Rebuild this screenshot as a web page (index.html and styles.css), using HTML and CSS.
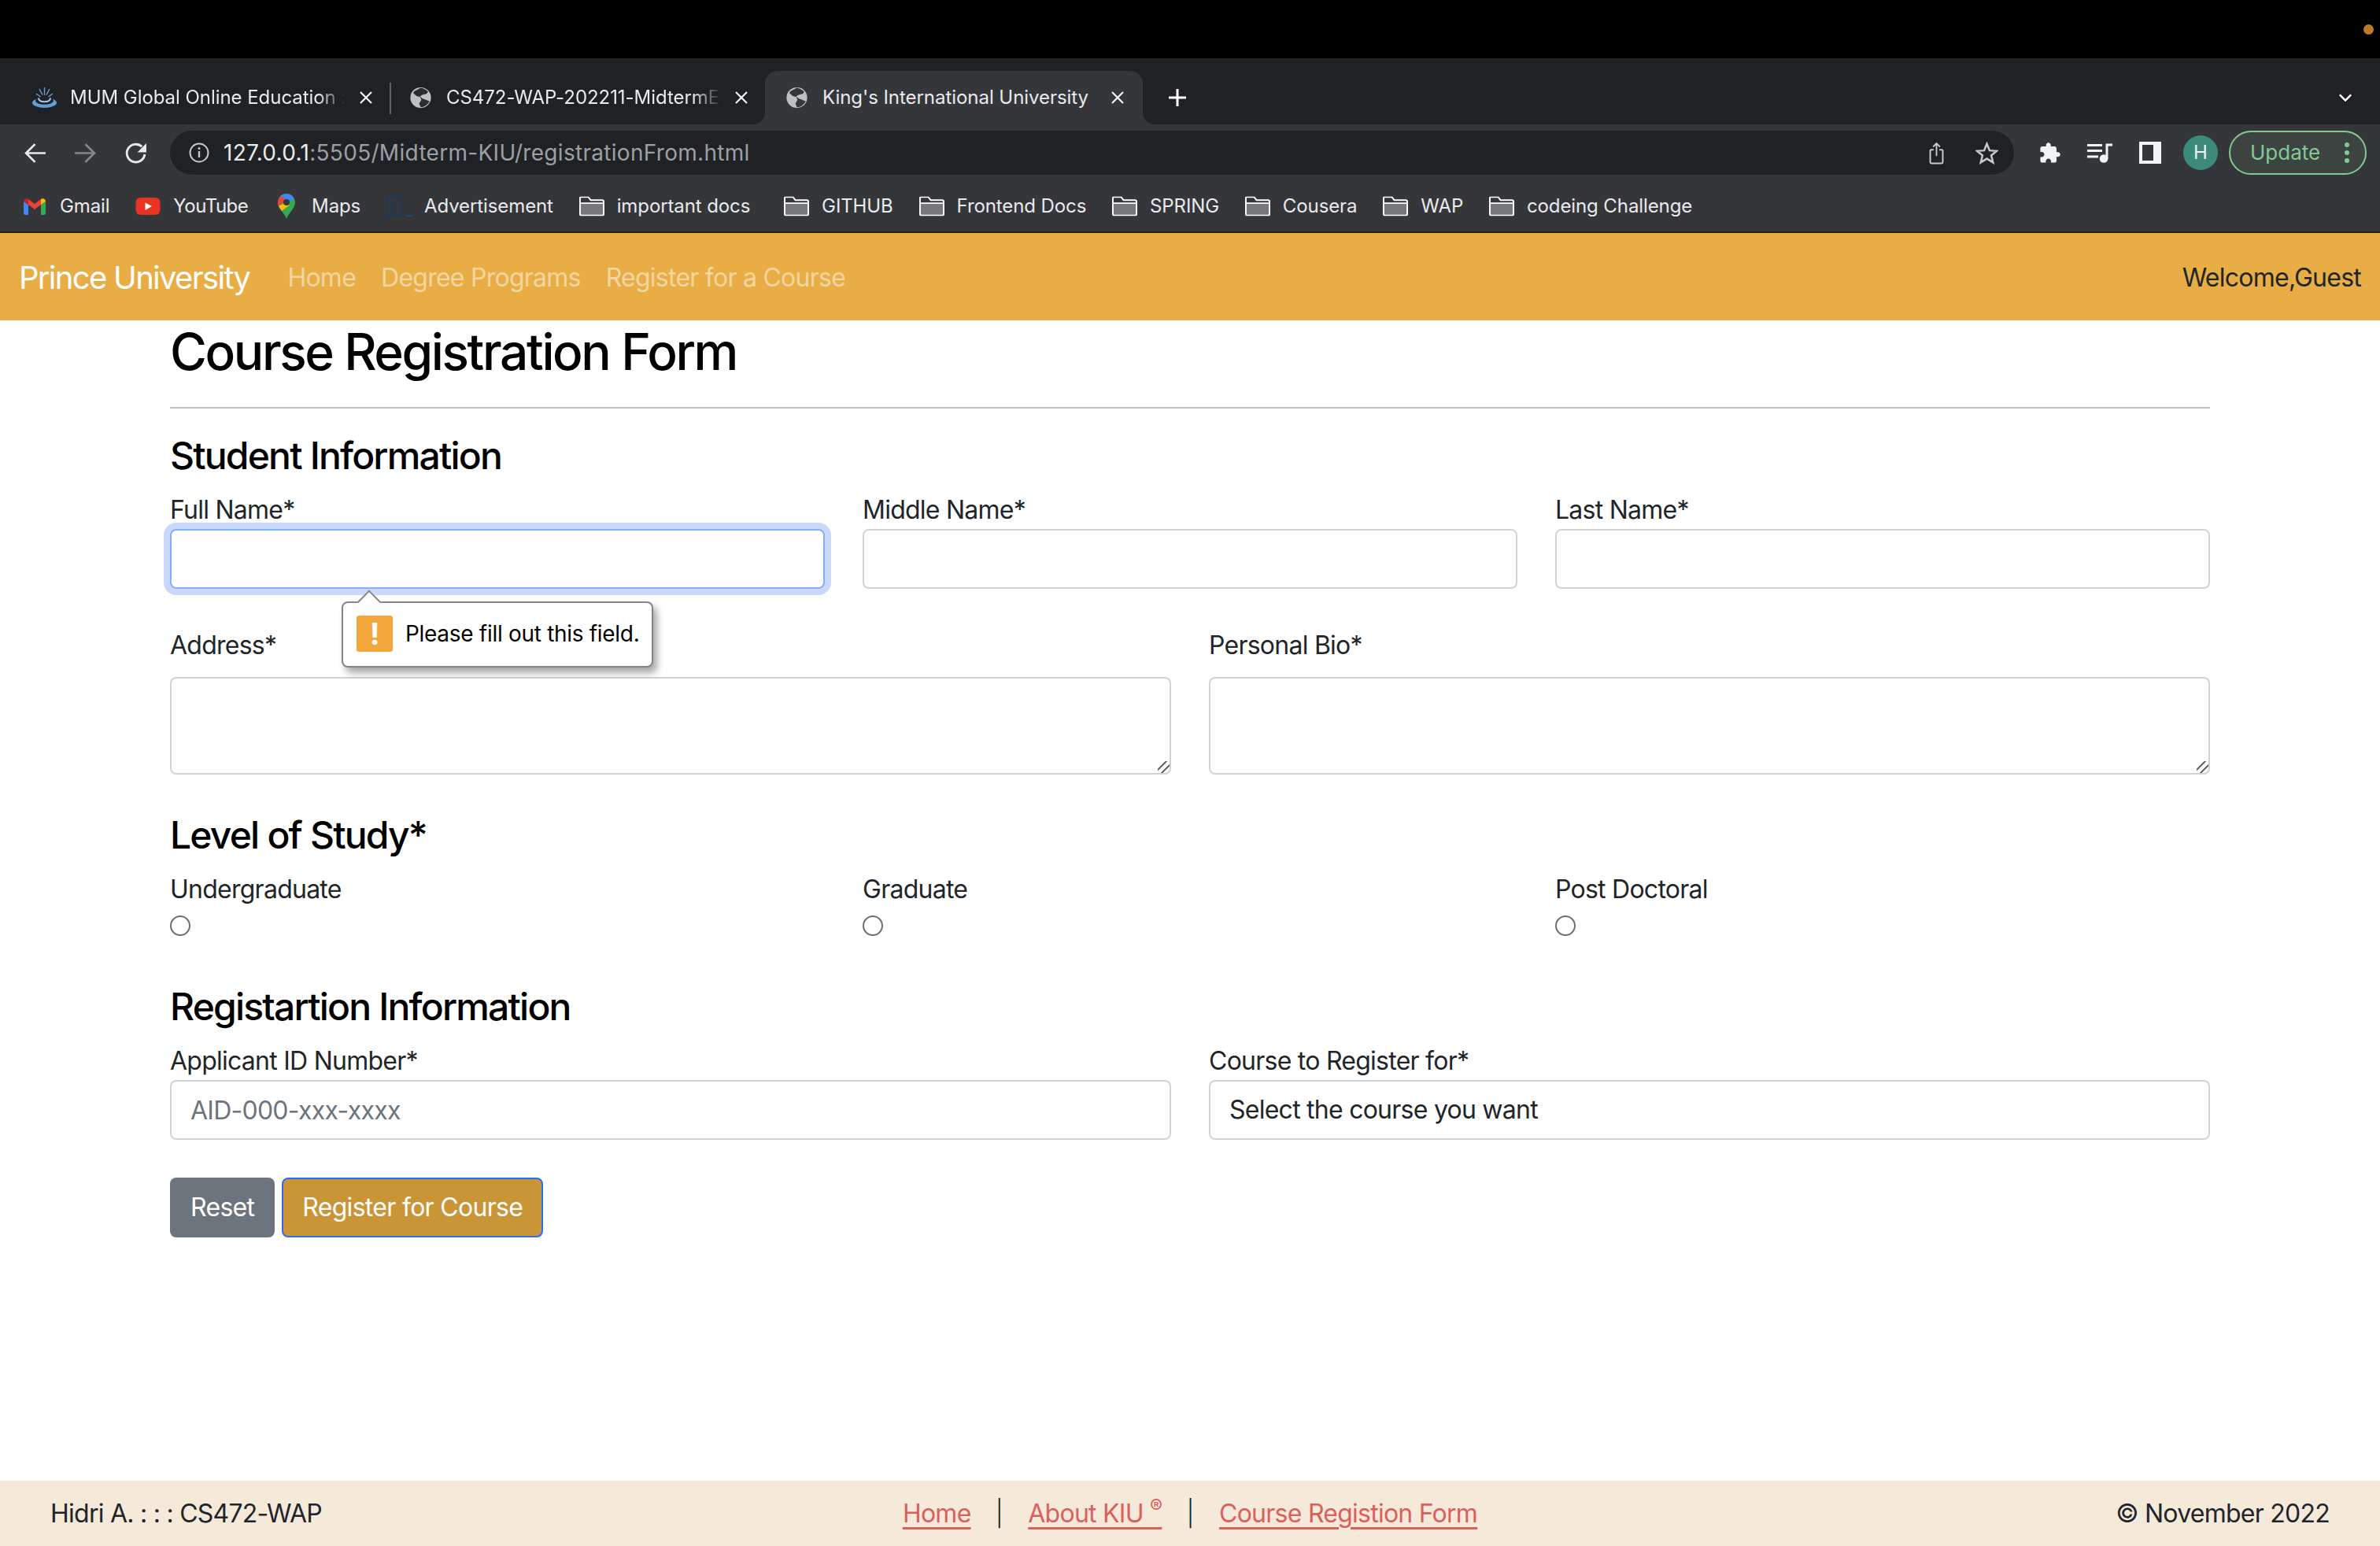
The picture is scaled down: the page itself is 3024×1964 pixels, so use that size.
FILE: index.html
```html
<!DOCTYPE html>
<html lang="en">
<head>
    <meta charset="UTF-8">
    <meta name="viewport" content="width=device-width, initial-scale=1.0">
    <title>King's International University</title>
    <link rel="stylesheet" href="styles.css">
</head>
<body>
    <div class="menu-strip"><span class="mic-dot"></span></div>

    <div class="tab-strip">
        <div class="tab tab-first">
            <svg class="favicon" viewBox="0 0 31 26"><ellipse cx="15.500" cy="19.500" rx="15.500" ry="6.500" fill="#5f9fd8"/><ellipse cx="15.500" cy="17" rx="11.500" ry="4.800" fill="#202124"/><path d="M8 13.500c0 3 3 4.800 7.500 4.800s7.500-1.800 7.500-4.800" stroke="#a9cbe8" stroke-width="2" fill="none"/><path d="M15.500 0v10M9 2l4 7.500M22 2l-4 7.500M5 8l5.500 4M26 8l-5.500 4" stroke="#6fa0cc" stroke-width="1.400" fill="none"/></svg>
            <span class="tab-title">MUM Global Online Education :</span>
            <svg class="tab-x" viewBox="0 0 16 16"><path d="M1 1l14 14M15 1L1 15" stroke="#f1f3f4" stroke-width="2.200"/></svg>
        </div>
        <div class="tab tab-sep">
            <svg class="favicon" viewBox="0 0 32 32"><circle cx="16" cy="16" r="14" fill="#bdc1c6"/><path d="M15 3c-3 3-8 3-9 7l5 4 4 1 2 4-3 5 2 5c5 0 9-3 12-8l-5-2-5-2-3-3 4-2 5-1 2-3c-3-3-7-5-11-5z" fill="#2b2c30"/></svg>
            <span class="tab-title">CS472-WAP-202211-MidtermE</span>
            <svg class="tab-x" viewBox="0 0 16 16"><path d="M1 1l14 14M15 1L1 15" stroke="#f1f3f4" stroke-width="2.200"/></svg>
        </div>
        <div class="tab tab-active">
            <svg class="favicon" viewBox="0 0 32 32"><circle cx="16" cy="16" r="14" fill="#bdc1c6"/><path d="M15 3c-3 3-8 3-9 7l5 4 4 1 2 4-3 5 2 5c5 0 9-3 12-8l-5-2-5-2-3-3 4-2 5-1 2-3c-3-3-7-5-11-5z" fill="#35363a"/></svg>
            <span class="tab-title">King's International University</span>
            <svg class="tab-x" viewBox="0 0 16 16"><path d="M1 1l14 14M15 1L1 15" stroke="#f1f3f4" stroke-width="2.200"/></svg>
        </div>
        <svg class="tab-plus" viewBox="0 0 24 24"><path d="M12 1v22M1 12h22" stroke="#fff" stroke-width="3"/></svg>
        <svg class="tab-more" viewBox="0 0 20 12"><path d="M2 2l8 8 8-8" stroke="#fff" stroke-width="2.600" fill="none"/></svg>
    </div>

    <div class="toolbar">
        <span class="tool-btn"><svg viewBox="0 0 28 28"><path d="M27 14H4M14 3L3 14l11 11" stroke="#e8eaed" stroke-width="2.600" fill="none"/></svg></span>
        <span class="tool-btn"><svg viewBox="0 0 28 28"><path d="M1 14h23M14 3l11 11-11 11" stroke="#86888c" stroke-width="2.600" fill="none"/></svg></span>
        <span class="tool-btn"><svg viewBox="0 0 28 28"><path d="M25 15.500a11 11 0 1 1-3.500-9.500" stroke="#e8eaed" stroke-width="2.800" fill="none"/><path d="M27 2v11H16z" fill="#e8eaed"/></svg></span>
        <div class="omnibox">
            <svg class="info-icon" viewBox="0 0 26 26"><circle cx="13" cy="13" r="11.500" stroke="#c4c7cb" stroke-width="2" fill="none"/><path d="M13 11v8" stroke="#c4c7cb" stroke-width="2.400"/><circle cx="13" cy="7.500" r="1.500" fill="#c4c7cb"/></svg>
            <span class="url"><span class="url-host">127.0.0.1</span>:5505/Midterm-KIU/registrationFrom.html</span>
            <span class="tool-btn"><svg viewBox="0 0 28 40"><path d="M14 25V3M8 9l6-6 6 6" stroke="#c4c7cb" stroke-width="2.600" fill="none"/><path d="M9 14H5a2 2 0 0 0-2 2v20a2 2 0 0 0 2 2h18a2 2 0 0 0 2-2V16a2 2 0 0 0-2-2h-4" stroke="#c4c7cb" stroke-width="2.800" fill="none"/></svg></span>
            <span class="tool-btn"><svg viewBox="0 0 32 32"><path d="M16 3l3.800 9.300 10 .7-7.700 6.400 2.500 9.700L16 23.800l-8.600 5.300 2.500-9.700L2.200 13l10-.7z" stroke="#c4c7cb" stroke-width="2.800" fill="none"/></svg></span>
        </div>
        <span class="tool-btn"><svg viewBox="0 0 24 24"><path d="M20.500 11H19V7c0-1.100-.9-2-2-2h-4V3.500C13 2.120 11.880 1 10.500 1S8 2.120 8 3.500V5H4c-1.100 0-2 .9-2 2v3.800h1.500c1.490 0 2.700 1.210 2.700 2.700s-1.210 2.700-2.700 2.700H2V20c0 1.100.9 2 2 2h3.800v-1.500c0-1.490 1.210-2.700 2.700-2.700s2.700 1.210 2.700 2.700V22H17c1.100 0 2-.9 2-2v-4h1.500c1.380 0 2.500-1.120 2.500-2.500S21.880 11 20.500 11z" fill="#f1f3f4"/></svg></span>
        <span class="tool-btn"><svg class="media-icon" viewBox="0 0 32 25"><path d="M0 2.500h19M0 9.500h19M0 17h14M25 20V2h7" stroke="#f1f3f4" stroke-width="3" fill="none"/><circle cx="21" cy="19.500" r="5.300" fill="#f1f3f4"/></svg></span>
        <span class="tool-btn"><span class="side-icon"></span></span>
        <span class="tool-btn"><span class="avatar">H</span></span>
        <div class="update-pill">
            <span>Update</span>
            <span class="update-dots"><i></i><i></i><i></i></span>
        </div>
    </div>

    <div class="bookmarks">
        <span class="bm"><svg class="bm-icon" viewBox="-2 -3 32 28"><path d="M0 5v15a2 2 0 0 0 2 2h4V9z" fill="#4285f4"/><path d="M22 9v13h4a2 2 0 0 0 2-2V5z" fill="#34a853"/><path d="M6 9V2l8 6 8-6v7l-8 6z" fill="#ea4335"/><path d="M0 5c0-3 3.500-5 6-3v7z" fill="#c5221f"/><path d="M22 2c2.500-2 6 0 6 3l-6 4z" fill="#fbbc04"/></svg>Gmail</span>
        <span class="bm bm-yt"><svg class="bm-icon" viewBox="-.5 -3 32 28"><rect width="31" height="22" rx="6" fill="#ea3323"/><path d="M12 6.500l8.500 4.500-8.500 5z" fill="#fff"/></svg>YouTube</span>
        <span class="bm"><svg class="bm-icon bm-pin" viewBox="-5 0 32 32"><path d="M11 32C9 25 0 19 0 11a11 11 0 0 1 22 0c0 8-9 14-11 21z" fill="#34a853"/><path d="M1 15.500 11 11l4 3.500L5 22c-1.500-2-3-4-4-6.500z" fill="#fbbc04"/><path d="M3.500 3A11 11 0 0 1 21 7L11 11 8 7z" fill="#4285f4"/><path d="M3.500 3A11 11 0 0 0 0 11c0 1.600.4 3.100 1 4.500L11 8z" fill="#ea4335"/><circle cx="11" cy="11" r="4" fill="#35363a"/></svg>Maps</span>
        <span class="bm"><svg class="bm-icon" viewBox="0 -1 32 28"><path d="M1 1h18v24H1z" fill="none" stroke="#1f3a50" stroke-width="2.400"/><path d="M13 10a4 4.500 0 1 0 0 7" stroke="#1f3a50" stroke-width="2" fill="none"/><path d="M24 25h8" stroke="#1d4a6b" stroke-width="2"/></svg>Advertisement</span>
        <span class="bm bm-long"><svg class="bm-icon" viewBox="0 0 33 26"><use href="#folder"/></svg>important docs</span>
        <span class="bm"><svg class="bm-icon" viewBox="0 0 33 26"><use href="#folder"/></svg>GITHUB</span>
        <span class="bm"><svg class="bm-icon" viewBox="0 0 33 26"><use href="#folder"/></svg>Frontend Docs</span>
        <span class="bm"><svg class="bm-icon" viewBox="0 0 33 26"><use href="#folder"/></svg>SPRING</span>
        <span class="bm"><svg class="bm-icon" viewBox="0 0 33 26"><use href="#folder"/></svg>Cousera</span>
        <span class="bm"><svg class="bm-icon" viewBox="0 0 33 26"><use href="#folder"/></svg>WAP</span>
        <span class="bm"><svg class="bm-icon" viewBox="0 0 33 26"><use href="#folder"/></svg>codeing Challenge</span>
    </div>

    <svg class="defs-only" width="0" height="0">
        <symbol id="folder" viewBox="0 0 33 26">
            <path d="M1 9h31v14a2 2 0 0 1-2 2H3a2 2 0 0 1-2-2z" fill="#77787b"/>
            <path d="M1 9V2a1 1 0 0 1 1-1h10l3 4h15a2 2 0 0 1 2 2v16a2 2 0 0 1-2 2H3a2 2 0 0 1-2-2zh31" stroke="#fff" stroke-width="2" fill="none"/>
        </symbol>
    </svg>

    <nav class="site-nav">
        <a class="brand">Prince University</a>
        <a class="nav-link">Home</a>
        <a class="nav-link">Degree Programs</a>
        <a class="nav-link">Register for a Course</a>
        <span class="welcome">Welcome,Guest</span>
    </nav>

    <main class="content">
        <h1>Course Registration Form</h1>
        <hr>
        <form>
            <h3>Student Information</h3>
            <div class="form-row cols-3">
                <div class="field">
                    <label>Full Name*</label>
                    <input class="form-control is-focus" type="text">
                    <div class="bubble">
                        <span class="bubble-arrow"></span>
                        <span class="bubble-icon">!</span>
                        <span>Please fill out this field.</span>
                    </div>
                </div>
                <div class="field">
                    <label>Middle Name*</label>
                    <input class="form-control" type="text">
                </div>
                <div class="field">
                    <label>Last Name*</label>
                    <input class="form-control" type="text">
                </div>
            </div>
            <div class="form-row cols-2">
                <div class="field">
                    <label class="spaced">Address*</label>
                    <textarea class="form-control" rows="2"></textarea>
                </div>
                <div class="field">
                    <label class="spaced">Personal Bio*</label>
                    <textarea class="form-control" rows="2"></textarea>
                </div>
            </div>

            <h3 class="section">Level of Study*</h3>
            <div class="form-row cols-3">
                <div class="field">
                    <label>Undergraduate</label>
                    <input class="radio" type="radio" name="level">
                </div>
                <div class="field">
                    <label>Graduate</label>
                    <input class="radio" type="radio" name="level">
                </div>
                <div class="field">
                    <label>Post Doctoral</label>
                    <input class="radio" type="radio" name="level">
                </div>
            </div>

            <h3 class="section-2">Registartion Information</h3>
            <div class="form-row cols-2">
                <div class="field">
                    <label>Applicant ID Number*</label>
                    <input class="form-control" type="text" placeholder="AID-000-xxx-xxxx">
                </div>
                <div class="field">
                    <label>Course to Register for*</label>
                    <select class="form-control">
                        <option>Select the course you want</option>
                    </select>
                </div>
            </div>

            <div class="form-actions">
                <button class="btn btn-reset" type="reset">Reset</button>
                <button class="btn btn-submit" type="button">Register for Course</button>
            </div>
        </form>
    </main>

    <footer class="site-footer">
        <span>Hidri A. : : : CS472-WAP</span>
        <span class="foot-links">
            <a>Home</a>
            <span class="foot-bar">|</span>
            <a>About KIU <sup>&reg;</sup></a>
            <span class="foot-bar">|</span>
            <a>Course Registion Form</a>
        </span>
        <span class="foot-right">&copy; November 2022</span>
    </footer>
</body>
</html>
```

FILE: styles.css
```css
* {
    box-sizing: border-box;
}

body {
    margin: 0;
    width: 3024px;
    height: 1964px;
    display: flex;
    flex-direction: column;
    overflow: hidden;
    background: #fff;
    color: #212529;
    font-family: Inter, "Liberation Sans", sans-serif;
    font-size: 32px;
    line-height: 48px;
    letter-spacing: -0.75px;
}

/* browser chrome */
.menu-strip {
    height: 74px;
    flex: none;
    background: #000;
    position: relative;
}

.mic-dot {
    position: absolute;
    right: 8px;
    top: 31px;
    width: 13px;
    height: 13px;
    border-radius: 50%;
    background: #c07a2c;
}

.tab-strip {
    height: 84px;
    flex: none;
    display: flex;
    padding: 16px 0 0 20px;
    background: #202124;
    color: #e8eaed;
    font-size: 24px;
    line-height: 68px;
    letter-spacing: -0.05px;
}

.tab {
    width: 476px;
    height: 68px;
    display: flex;
    align-items: center;
    padding: 0 22px 0 23px;
    position: relative;
}

.tab-first {
    padding: 0 23px 0 21px;
}

.tab-sep::before {
    content: "";
    position: absolute;
    left: -1px;
    top: 15px;
    width: 2px;
    height: 40px;
    background: #5f6368;
}

.tab-active {
    width: 480px;
    background: #35363a;
    border-radius: 16px 16px 0 0;
    padding: 0 24px 0 25px;
}

.tab-active::before,
.tab-active::after {
    content: "";
    position: absolute;
    bottom: 0;
    width: 16px;
    height: 16px;
}

.tab-active::before {
    left: -16px;
    background: radial-gradient(circle at 0 0, #202124 16px, #35363a 16.5px);
}

.tab-active::after {
    right: -16px;
    background: radial-gradient(circle at 100% 0, #202124 16px, #35363a 16.5px);
}

.favicon {
    width: 31px;
    height: 30px;
    flex: none;
}

.tab-title {
    flex: 1;
    margin-left: 17px;
    white-space: nowrap;
    overflow: hidden;
    -webkit-mask-image: linear-gradient(to right, #000 90%, transparent 100%);
    mask-image: linear-gradient(to right, #000 90%, transparent 100%);
}

.tab-active .tab-title {
    -webkit-mask-image: none;
    mask-image: none;
}

.tab-x {
    flex: none;
    width: 16px;
    height: 16px;
    margin-left: 18px;
}

.tab-plus {
    width: 26px;
    height: 24px;
    margin: 22px 0 0 31px;
}

.tab-more {
    width: 18px;
    height: 12px;
    margin: 28px 35px 0 auto;
}

.toolbar {
    height: 64px;
    flex: none;
    display: flex;
    align-items: flex-start;
    padding: 8px 0 0 12px;
    background: #35363a;
    letter-spacing: 0;
}

.tool-btn {
    width: 64px;
    height: 56px;
    flex: none;
    display: flex;
    align-items: center;
    justify-content: center;
}

.tool-btn svg {
    width: 29px;
    height: 29px;
}

.tool-btn .media-icon {
    width: 32px;
    height: 25px;
}

.omnibox {
    width: 2343px;
    height: 56px;
    flex: none;
    display: flex;
    align-items: center;
    margin: 0 13px 0 12px;
    padding: 0 3px 0 24px;
    border-radius: 28px;
    background: #202124;
    color: #9aa0a6;
    font-size: 28px;
    line-height: 56px;
    letter-spacing: 0.3px;
}

.info-icon {
    width: 26px;
    height: 26px;
    flex: none;
}

.url {
    flex: 1;
    margin-left: 18px;
}

.url-host {
    color: #e8eaed;
}

.side-icon {
    width: 28px;
    height: 28px;
    border: 4px solid #f1f3f4;
    border-right-width: 10px;
}

.avatar {
    width: 44px;
    height: 44px;
    border-radius: 50%;
    background: #3b8a7a;
    color: #e8f5f2;
    font-size: 24px;
    line-height: 44px;
    text-align: center;
}

.update-pill {
    width: 175px;
    height: 56px;
    flex: none;
    display: flex;
    align-items: center;
    justify-content: space-between;
    margin-left: 4px;
    padding: 0 20px 0 25px;
    border: 2px solid #81c995;
    border-radius: 28px;
    background: #3c4340;
    color: #81c995;
    font-size: 26px;
}

.update-dots {
    display: flex;
    flex-direction: column;
    gap: 4px;
}

.update-dots i {
    width: 6px;
    height: 6px;
    border-radius: 50%;
    background: #81c995;
}

.bookmarks {
    height: 74px;
    flex: none;
    display: flex;
    align-items: center;
    gap: 32.8px;
    padding: 8px 0 0 28px;
    border-bottom: 2px solid #202124;
    background: #35363a;
    color: #e8eaed;
    font-size: 24px;
    letter-spacing: -0.1px;
}

.bm {
    display: flex;
    align-items: center;
    gap: 16px;
    white-space: nowrap;
}

.bm-yt {
    letter-spacing: -0.5px;
}

.bm-long {
    margin-right: 10px;
}

.bm-icon {
    width: 32px;
    height: 28px;
    flex: none;
}

.bm-pin {
    height: 32px;
}

.defs-only {
    position: absolute;
}

/* site */
.site-nav {
    height: 111px;
    flex: none;
    display: flex;
    align-items: center;
    padding: 2px 24px 0;
    background: #e8ad45;
}

.brand {
    margin-right: 48px;
    color: #fff;
    font-size: 40px;
    letter-spacing: -1.7px;
}

.nav-link {
    margin-right: 32px;
    color: #f3d6a2;
}

.welcome {
    margin-left: auto;
}

.content {
    flex: 1;
    padding: 1px 216px 0;
}

h1 {
    margin: 0;
    font-size: 64px;
    font-weight: 500;
    line-height: 77px;
    letter-spacing: -2.4px;
    color: #000;
}

hr {
    height: 2px;
    margin: 32px 0 31px;
    border: 0;
    background: #c0c0c0;
}

h3 {
    margin: 0 0 16px;
    font-size: 48px;
    font-weight: 500;
    line-height: 58px;
    letter-spacing: -1.8px;
    color: #000;
}

.section {
    margin-top: 48px;
}

.section-2 {
    margin-top: 61px;
}

.form-row {
    display: grid;
    gap: 48px;
}

.form-row + .form-row {
    margin-top: 48px;
}

.cols-3 {
    grid-template-columns: repeat(3, 1fr);
}

.cols-2 {
    grid-template-columns: repeat(2, 1fr);
}

.field {
    position: relative;
}

label {
    display: block;
}

label.spaced {
    margin-bottom: 16px;
}

.form-control {
    display: block;
    width: 100%;
    height: 76px;
    padding: 12px 24px;
    border: 2px solid #ced4da;
    border-radius: 8px;
    background: #fff;
    color: #212529;
    font: inherit;
    letter-spacing: inherit;
    appearance: none;
    outline: none;
}

.form-control::placeholder {
    color: #6c757d;
}

textarea.form-control {
    height: 124px;
    resize: vertical;
}

textarea.form-control::-webkit-resizer {
    background: linear-gradient(135deg, transparent 33%, #6e6e6e 33%, #6e6e6e 42%, transparent 42%, transparent 63%, #6e6e6e 63%, #6e6e6e 72%, transparent 72%);
}

.is-focus {
    border-color: #86b0f8;
    box-shadow: 0 0 0 8px #c9d8fb;
}

.radio {
    display: block;
    width: 26px;
    height: 26px;
    margin: 9px 0 0;
    border: 2px solid #6f6f6f;
    border-radius: 50%;
    background: #fff;
    appearance: none;
}

/* validation bubble */
.bubble {
    position: absolute;
    left: 218px;
    top: 140px;
    width: 396px;
    height: 84px;
    display: flex;
    align-items: center;
    gap: 16px;
    padding: 0 0 2px 17px;
    border: 2px solid #858585;
    border-radius: 8px;
    background: #fff;
    box-shadow: 5px 7px 10px rgba(0, 0, 0, 0.35);
    color: #000;
    font-size: 28px;
    letter-spacing: -0.3px;
    z-index: 2;
}

.bubble-arrow {
    position: absolute;
    left: 22px;
    top: -12px;
    width: 22px;
    height: 22px;
    border-top: 2px solid #858585;
    border-left: 2px solid #858585;
    background: #fff;
    transform: rotate(45deg);
}

.bubble-icon {
    width: 46px;
    height: 46px;
    flex: none;
    border-radius: 3px;
    background: #f4a83c;
    color: #fff;
    font-size: 38px;
    font-weight: 700;
    line-height: 46px;
    text-align: center;
}

.form-actions {
    display: flex;
    gap: 9px;
    margin-top: 48px;
}

.btn {
    height: 76px;
    padding: 0 24px;
    border: 2px solid transparent;
    border-radius: 8px;
    color: #fff;
    font: inherit;
    letter-spacing: -0.7px;
}

.btn-reset {
    background: #6c757d;
}

.btn-submit {
    border-color: #2e6cf0;
    background: #c99536;
}

.site-footer {
    height: 83px;
    flex: none;
    display: grid;
    grid-template-columns: 1fr auto 1fr;
    align-items: center;
    padding: 0 64px;
    background: #f5ead9;
}

.foot-links a {
    color: #d9605e;
    text-decoration: underline;
    text-decoration-thickness: 3px;
    text-underline-offset: 6px;
}

.foot-links sup {
    font-size: 24px;
    line-height: 0;
}

.foot-bar {
    margin: 0 24px 0 23px;
    font-weight: 300;
}

.foot-right {
    justify-self: end;
}
```
